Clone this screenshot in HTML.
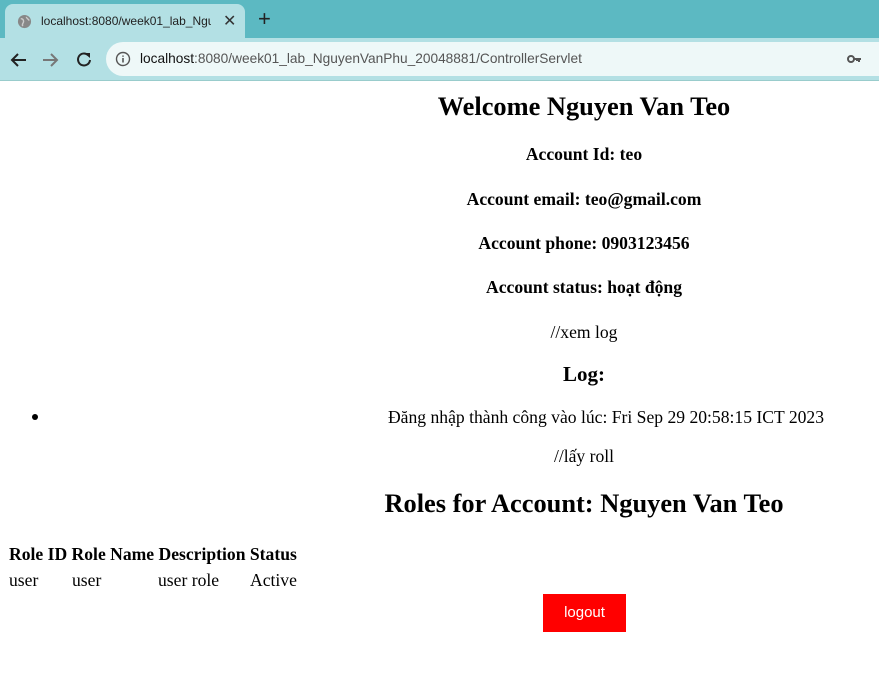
<!DOCTYPE html>
<html><head><meta charset="utf-8"><style>
*{margin:0;padding:0;box-sizing:border-box}
body{width:879px;height:682px;overflow:hidden;background:#fff;position:relative;font-family:"Liberation Serif",serif;color:#000}
.top{position:absolute;left:0;top:0;width:879px;height:38px;background:#5cb9c2}
.tab{position:absolute;left:5px;top:4px;width:240px;height:36px;background:#b3e0e4;border-radius:8px 8px 0 0}
.tab .t{position:absolute;left:36px;top:10px;font:12px "Liberation Sans",sans-serif;color:#222;width:170px;overflow:hidden;white-space:nowrap}
.tb{position:absolute;left:0;top:38px;width:879px;height:42px;background:#b3e0e4}
.addr{position:absolute;left:106px;top:42px;width:790px;height:34px;background:#eef8f8;border-radius:17px}
.url{position:absolute;left:140px;top:51px;font:13.7px "Liberation Sans",sans-serif;color:#555}
.url b{font-weight:normal;color:#111}
.line{position:absolute;left:0;top:80px;width:879px;height:1px;background:#9cc}
.c{position:absolute;left:284px;width:600px;text-align:center;white-space:nowrap}
.b{font-weight:bold}
.m{font-size:17.6px}
</style></head><body>
<div class="top"></div>
<div class="tab"><svg style="position:absolute;left:12px;top:10px" width="15" height="15" viewBox="0 0 16 16"><circle cx="8" cy="8" r="7" fill="#888"/><path d="M4 5c2 0 3 1 3 3s-2 2-1 5M10 3c0 2 2 2 3 4" stroke="#ccc" stroke-width="1.5" fill="none"/></svg><div class="t">localhost:8080/week01_lab_Nguy</div><span style="position:absolute;left:218px;top:7px;font:16px 'Liberation Sans',sans-serif;color:#333">✕</span></div>
<span style="position:absolute;left:258px;top:6px;font:22px 'Liberation Sans',sans-serif;color:#222">+</span>
<div class="tb"></div>
<svg style="position:absolute;left:10px;top:51px" width="100" height="18" viewBox="0 0 100 18">
<path d="M2 9h14M8 3L2 9l6 6" stroke="#222" stroke-width="2" fill="none"/>
<path d="M33 9h14M41 3l6 6-6 6" stroke="#777" stroke-width="2" fill="none"/>
<path d="M78 4a6 6 0 1 0 2 5" stroke="#222" stroke-width="2" fill="none"/><path d="M74 2h6v5z" fill="#222"/>
</svg>
<div class="addr"></div>
<svg style="position:absolute;left:115px;top:51px" width="16" height="16" viewBox="0 0 16 16"><circle cx="8" cy="8" r="6.5" stroke="#555" stroke-width="1.4" fill="none"/><path d="M8 7v4.5M8 4.5v1.2" stroke="#555" stroke-width="1.6"/></svg>
<div class="url"><b>localhost</b>:8080/week01_lab_NguyenVanPhu_20048881/ControllerServlet</div>
<svg style="position:absolute;left:847px;top:54px" width="15" height="10" viewBox="0 0 15 10"><circle cx="4" cy="5" r="3" stroke="#555" stroke-width="2" fill="none"/><path d="M7 5h7M12 5v3M10 5v2" stroke="#555" stroke-width="2"/></svg>
<div class="line"></div>

<div class="c b" style="top:91px;font-size:26.4px">Welcome Nguyen Van Teo</div>
<div class="c b m" style="top:144px">Account Id: teo</div>
<div class="c b m" style="top:189px">Account email: teo@gmail.com</div>
<div class="c b m" style="top:233px">Account phone: 0903123456</div>
<div class="c b m" style="top:277px">Account status: hoạt động</div>
<div class="c m" style="top:322px">//xem log</div>
<div class="c b" style="top:362px;font-size:21px">Log:</div>
<div style="position:absolute;left:32px;top:414px;width:6px;height:6px;border-radius:3px;background:#000"></div>
<div class="c m" style="top:407px;left:306px">Đăng nhập thành công vào lúc: Fri Sep 29 20:58:15 ICT 2023</div>
<div class="c m" style="top:446px">//lấy roll</div>
<div class="c b" style="top:488px;font-size:26.4px">Roles for Account: Nguyen Van Teo</div>
<div class="m" style="position:absolute;left:9px;top:544px;font-weight:bold;white-space:nowrap">Role ID Role Name Description Status</div>
<div class="m" style="position:absolute;left:9px;top:570px">user</div>
<div class="m" style="position:absolute;left:72px;top:570px">user</div>
<div class="m" style="position:absolute;left:158px;top:570px">user role</div>
<div class="m" style="position:absolute;left:250px;top:570px">Active</div>
<div style="position:absolute;left:543px;top:594px;width:83px;height:38px;background:#f00;color:#fff;font:15px 'Liberation Sans',sans-serif;text-align:center;line-height:38px">logout</div>
</body></html>
